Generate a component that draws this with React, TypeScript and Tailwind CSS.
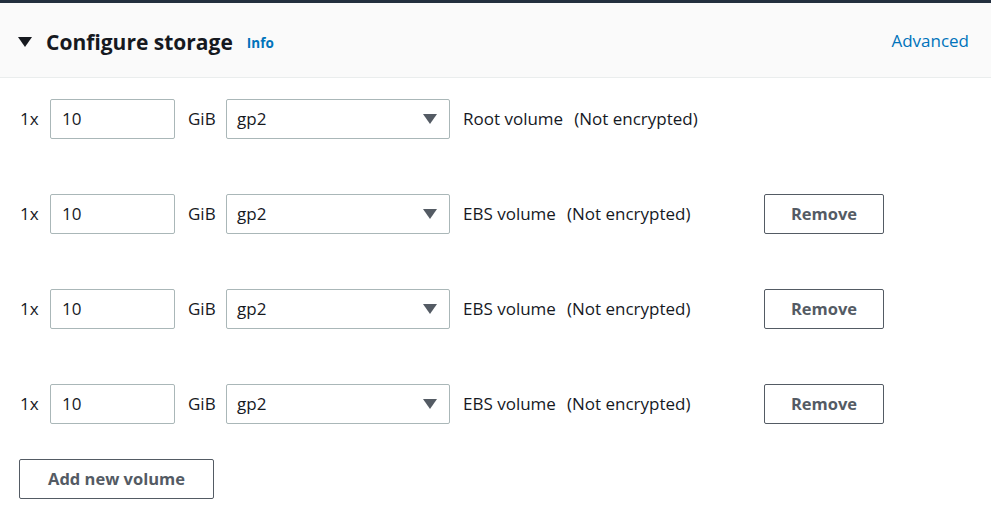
import React from "react";

const rows = [
  { label: "Root volume", removable: false },
  { label: "EBS volume", removable: true },
  { label: "EBS volume", removable: true },
  { label: "EBS volume", removable: true },
];

function Caret() {
  return (
    <svg width="14" height="10" viewBox="0 0 14 10" className="shrink-0">
      <path d="M0 0h14L7 10z" fill="currentColor" />
    </svg>
  );
}

function VolumeRow({ label, removable }: { label: string; removable: boolean }) {
  return (
    <div className="flex h-10 items-center text-[17px] text-[#16191f]">
      <span className="w-[30px]">1x</span>
      <div className="flex h-10 w-[125px] items-center rounded-[2px] border border-[#aab7b8] bg-white px-[11px]">
        10
      </div>
      <span className="ml-[13px] w-[38px]">GiB</span>
      <div className="flex h-10 w-[224px] items-center justify-between rounded-[2px] border border-[#aab7b8] bg-white pl-[10px] pr-[12px]">
        <span>gp2</span>
        <span className="text-[#545b64]">
          <Caret />
        </span>
      </div>
      <span className="ml-[13px]">{label}</span>
      <span className="ml-[11px]">(Not encrypted)</span>
      {removable && (
        <button className="ml-auto mr-[107px] flex h-10 w-[120px] items-center justify-center rounded-[2px] border border-[#545b64] bg-white text-[16.5px] font-bold text-[#545b64]">
          Remove
        </button>
      )}
    </div>
  );
}

export default function App() {
  return (
    <div
      className="min-h-[519px] w-full bg-white"
      style={{ fontFamily: '"Open Sans", "Noto Sans", Arial, sans-serif' }}
    >
      <div className="h-[3px] bg-[#232f3e]" />
      <div className="flex h-[75px] items-center justify-between border-b border-[#eaeded] bg-[#fafafa] pl-[18px] pr-[22px]">
        <div className="flex items-center">
          <span className="mt-[4px] text-[#16191f]">
            <Caret />
          </span>
          <h2 className="ml-[14px] mt-[4px] text-[21px] font-bold leading-none text-[#16191f]">Configure storage</h2>
          <a className="ml-[14px] mt-[7px] text-[13.5px] font-bold text-[#0073bb]">Info</a>
        </div>
        <a className="mt-[1px] text-[17px] text-[#0073bb]">Advanced</a>
      </div>
      <div className="flex flex-col gap-[55px] pl-[20px] pt-[21px]">
        {rows.map((r, i) => (
          <VolumeRow key={i} label={r.label} removable={r.removable} />
        ))}
      </div>
      <div className="pl-[19px] pt-[35px]">
        <button className="flex h-10 w-[195px] items-center justify-center rounded-[2px] border border-[#545b64] bg-white text-[16.5px] font-bold text-[#545b64]">
          Add new volume
        </button>
      </div>
    </div>
  );
}
